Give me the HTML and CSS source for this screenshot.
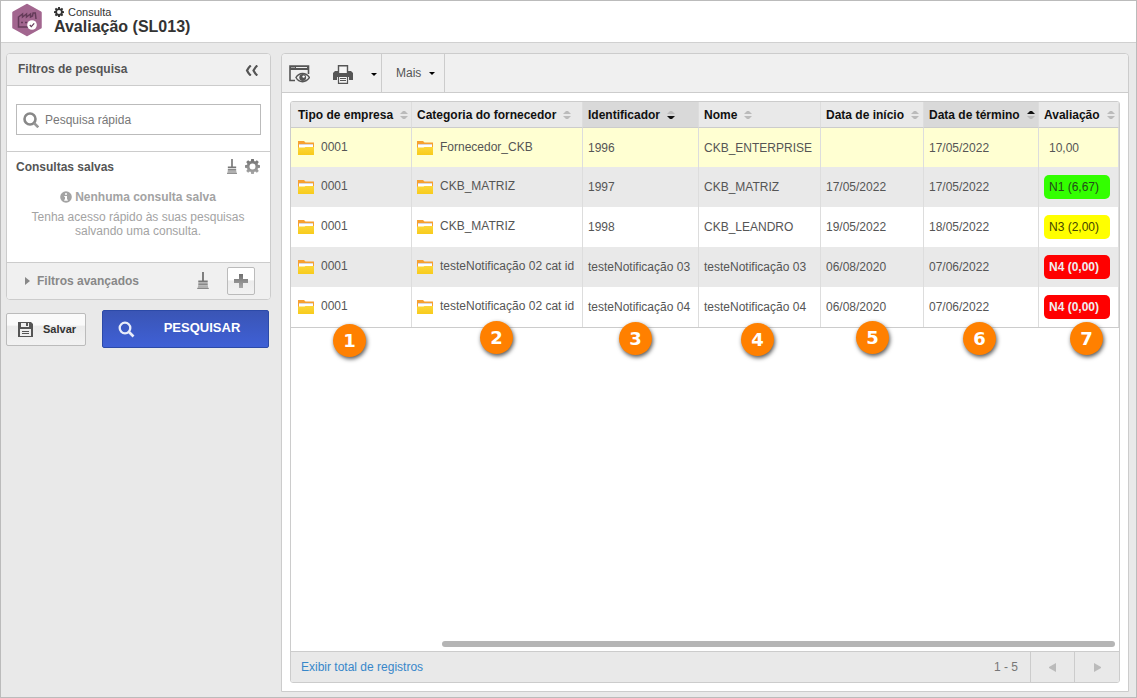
FILE: index.html
```html
<!DOCTYPE html>
<html lang="pt-BR">
<head>
<meta charset="utf-8">
<title>Avaliação (SL013)</title>
<link rel="stylesheet" href="styles.css">
</head>
<body>
<svg class="defs" width="0" height="0" aria-hidden="true">
  <defs>
    <linearGradient id="folderFill" x1="0" y1="0" x2="0" y2="1"><stop offset="0" stop-color="#fcd63a"/><stop offset="1" stop-color="#f8cb1c"/></linearGradient>
    <linearGradient id="grayFill" x1="0" y1="0" x2="0" y2="1"><stop offset="0" stop-color="#707070"/><stop offset="1" stop-color="#a8a8a8"/></linearGradient>
    <symbol id="folder" viewBox="0 0 16 14">
      <path d="M0 0h6l1.500 1.500H16V7H0z" fill="#f7a030"/><path d="M1 3h14v4H1z" fill="#fff"/><path d="M1 3h14v1H1z" fill="#ddd8d5"/><path d="M0 6.500h6.500L7.500 6H16v8H0z" fill="url(#folderFill)"/>
    </symbol>
    <symbol id="sort" viewBox="0 0 8 8">
      <path class="up" d="M0 3l3-3h2l3 3z"/><path class="down" d="M0 5h8L5 8H3z"/>
    </symbol>
    <symbol id="broom" viewBox="0 0 12 18">
      <path d="M5 0h2v9h4v2H1V9h4z" fill="#777"/><path d="M1 12h10v2H1z" fill="#888"/><path d="M1 14h10l1 4H0z" fill="#b0b0b0"/><path d="M0 17h12v1H0z" fill="#888"/>
    </symbol>
    <symbol id="gear" viewBox="0 0 16 16">
      <path fill-rule="evenodd" d="M6.600 0h2.800l.4 2.200 1 .4 1.900-1.300 2 2-1.300 1.900.4 1 2.200.4v2.800l-2.200.4-.4 1 1.300 1.900-2 2-1.900-1.300-1 .4L9.400 16H6.600l-.4-2.200-1-.4-1.900 1.300-2-2 1.300-1.900-.4-1L0 9.400V6.600l2.200-.4.4-1-1.300-1.900 2-2 1.900 1.300 1-.4zM8 4.800a3.200 3.200 0 1 0 0 6.400 3.200 3.200 0 0 0 0-6.400z"/>
    </symbol>
  </defs>
</svg>
<div class="app">
  <header class="top">
    <svg class="logo" width="32" height="34" viewBox="0 0 32 34" aria-hidden="true">
      <path d="M16 2l13.500 7.500v15L16 32 2.500 24.500v-15z" fill="#a2668f" stroke="#a2668f" stroke-width="2.500" stroke-linejoin="round"/>
      <path d="M17 24H7.500V14l4-3v3l4-3v3l4-3v3l2-1 .6-3h2.200l.7 6" fill="none" stroke="#643b59" stroke-width="1.500"/>
      <path d="M10 19.500h2M14 19.500h2" stroke="#643b59" stroke-width="1.500"/>
      <circle cx="21" cy="22" r="4.800" fill="#fff"/><path d="M18.800 22l1.500 1.600 2.900-3.200" fill="none" stroke="#643b59" stroke-width="1.200"/>
    </svg>
    <div>
      <div class="crumb"><svg width="10" height="10"><use href="#gear"/></svg>Consulta</div>
      <h1>Avaliação (SL013)</h1>
    </div>
  </header>
  <div class="body">
    <aside class="side">
      <section class="filters">
        <div class="filters-head">
          <h2>Filtros de pesquisa</h2>
          <button class="plain" aria-label="Recolher"><svg width="13" height="11" viewBox="0 0 13 11"><path d="M5.800.5C4 2 3 3.500 2 5.500c1 2 2 3.500 3.800 5M12.300.5c-1.800 1.500-2.800 3-3.800 5 1 2 2 3.500 3.800 5" fill="none" stroke="#555" stroke-width="2.200"/></svg></button>
        </div>
        <div class="quick">
          <label class="searchbox">
            <svg width="16" height="16" viewBox="0 0 16 16" aria-hidden="true"><circle cx="7" cy="7" r="5.500" fill="none" stroke="#888" stroke-width="2.600"/><path d="M11 11l4.300 4.300" stroke="#999" stroke-width="2.600"/></svg>
            <input type="text" placeholder="Pesquisa rápida" aria-label="Pesquisa rápida">
          </label>
        </div>
        <div class="saved">
          <div class="saved-head">
            <h3>Consultas salvas</h3>
            <button class="plain" aria-label="Limpar consultas"><svg width="10" height="15"><use href="#broom"/></svg></button>
            <button class="plain" aria-label="Configurar"><svg width="15" height="15" fill="url(#grayFill)"><use href="#gear"/></svg></button>
          </div>
          <p class="none"><svg width="12" height="12" viewBox="0 0 12 12" aria-hidden="true"><circle cx="6" cy="6" r="5.800" fill="#a3a3a3"/><path d="M5 2.200h2v1.600H5zM4.300 5H7v3.500h.8v1.200H4.200V8.500H5V6h-.7z" fill="#fff"/></svg>Nenhuma consulta salva</p>
          <p class="hint">Tenha acesso rápido às suas pesquisas salvando uma consulta.</p>
        </div>
        <div class="advanced">
          <button class="plain expand"><svg width="5" height="8" viewBox="0 0 5 8"><path d="M0 0l5 4-5 4z" fill="#888"/></svg>Filtros avançados</button>
          <button class="plain" aria-label="Limpar filtros"><svg width="12" height="17"><use href="#broom"/></svg></button>
          <button class="add" aria-label="Adicionar filtro"><svg width="14" height="14" viewBox="0 0 14 14"><path d="M5 0h4v5h5v4H9v5H5V9H0V5h5z" fill="url(#grayFill)"/></svg></button>
        </div>
      </section>
      <div class="actions">
        <button class="save"><svg width="15" height="15" viewBox="0 0 15 15"><path d="M0 0h13l2 2v13H0z" fill="#555"/><path d="M3 1h8v4H3zM2 7h11v7H2z" fill="#eee"/><path d="M8 1h2v3H8zM4 9h7v1H4zM4 11h7v1H4z" fill="#555"/></svg>Salvar</button>
        <button class="search"><svg width="17" height="17" viewBox="0 0 17 17"><circle cx="7" cy="7" r="5.300" fill="none" stroke="#e9edfa" stroke-width="2.300"/><path d="M11 11l4.500 4.500" stroke="#e9edfa" stroke-width="2.600"/></svg><span>PESQUISAR</span></button>
      </div>
    </aside>
    <main class="panel">
      <div class="toolbar">
        <div class="group icons">
          <button class="plain" aria-label="Visualizar"><svg width="21" height="18" viewBox="0 0 21 18"><path d="M6 15.500H1V1h18.500v8" fill="none" stroke="#555" stroke-width="1.600"/><path d="M1 1h18.500v4H1z" fill="#555"/><path d="M2.500 2.500h1M4.500 2.500h1M7 2.500h11" stroke="#eee"/><path d="M7 12.500c3-5.500 10-5.500 13.500 0-3.500 5.500-10.500 5.500-13.500 0z" fill="#f0f0f0" stroke="#555" stroke-width="1.500"/><circle cx="13.700" cy="12.500" r="3.400" fill="#555"/><circle cx="14.600" cy="11.600" r="1.200" fill="#fff"/></svg></button>
          <button class="plain" aria-label="Imprimir"><svg width="20" height="19" viewBox="0 0 20 19"><path d="M5.500 8V.8h9V8" fill="#f5f5f5" stroke="#555" stroke-width="1.400"/><path d="M2 6h3v2h10V6h3l2 2v7h-4v-3H4v3H0V8z" fill="#555"/><path d="M5.500 12v6.300h9V12" fill="#f5f5f5" stroke="#555" stroke-width="1.200"/><path d="M7 13.500h6M7 15.500h6" stroke="#555"/></svg></button>
          <button class="plain" aria-label="Opções de impressão"><svg width="6" height="3" viewBox="0 0 6 3"><path d="M0 0h6L3 3z"/></svg></button>
        </div>
        <div class="group"><button class="plain more">Mais<svg width="6" height="3" viewBox="0 0 6 3"><path d="M0 0h6L3 3z"/></svg></button></div>
      </div>
      <div class="content">
        <div class="grid">
          <div class="rows">
            <table>
              <colgroup><col class="c1"><col class="c2"><col class="c3"><col class="c4"><col class="c5"><col class="c6"><col class="c7"></colgroup>
              <thead><tr>
                <th><div>Tipo de empresa<svg><use href="#sort"/></svg></div></th>
                <th><div>Categoria do fornecedor<svg><use href="#sort"/></svg></div></th>
                <th class="sorted desc"><div>Identificador<svg><use href="#sort"/></svg></div></th>
                <th><div>Nome<svg><use href="#sort"/></svg></div></th>
                <th><div>Data de início<svg><use href="#sort"/></svg></div></th>
                <th class="sorted asc"><div>Data de término<svg><use href="#sort"/></svg></div></th>
                <th><div>Avaliação<svg><use href="#sort"/></svg></div></th>
              </tr></thead>
              <tbody>
                <tr class="selected"><td><div class="item"><svg><use href="#folder"/></svg>0001</div></td><td><div class="item"><svg><use href="#folder"/></svg>Fornecedor_CKB</div></td><td>1996</td><td>CKB_ENTERPRISE</td><td></td><td>17/05/2022</td><td><span class="score">10,00</span></td></tr>
                <tr class="alt"><td><div class="item"><svg><use href="#folder"/></svg>0001</div></td><td><div class="item"><svg><use href="#folder"/></svg>CKB_MATRIZ</div></td><td>1997</td><td>CKB_MATRIZ</td><td>17/05/2022</td><td>17/05/2022</td><td><span class="score green">N1 (6,67)</span></td></tr>
                <tr><td><div class="item"><svg><use href="#folder"/></svg>0001</div></td><td><div class="item"><svg><use href="#folder"/></svg>CKB_MATRIZ</div></td><td>1998</td><td>CKB_LEANDRO</td><td>19/05/2022</td><td>18/05/2022</td><td><span class="score yellow">N3 (2,00)</span></td></tr>
                <tr class="alt"><td><div class="item"><svg><use href="#folder"/></svg>0001</div></td><td><div class="item"><svg><use href="#folder"/></svg>testeNotificação 02 cat id</div></td><td>testeNotificação 03</td><td>testeNotificação 03</td><td>06/08/2020</td><td>07/06/2022</td><td><span class="score red">N4 (0,00)</span></td></tr>
                <tr><td><div class="item"><svg><use href="#folder"/></svg>0001</div></td><td><div class="item"><svg><use href="#folder"/></svg>testeNotificação 02 cat id</div></td><td>testeNotificação 04</td><td>testeNotificação 04</td><td>06/08/2020</td><td>07/06/2022</td><td><span class="score red">N4 (0,00)</span></td></tr>
              </tbody>
            </table>
            <span class="pin p1">1</span><span class="pin p2">2</span><span class="pin p3">3</span><span class="pin p4">4</span><span class="pin p5">5</span><span class="pin p6">6</span><span class="pin p7">7</span>
          </div>
          <div class="scroll"><div class="thumb"></div></div>
          <footer class="pager">
            <a href="#total">Exibir total de registros</a>
            <span class="range">1 - 5</span>
            <button class="plain page" aria-label="Anterior"><svg width="7" height="9" viewBox="0 0 7 9"><path d="M7 0v9L0 5V4z" fill="#bbb"/></svg></button>
            <button class="plain page" aria-label="Próxima"><svg width="7" height="9" viewBox="0 0 7 9"><path d="M0 0v9l7-4V4z" fill="#bbb"/></svg></button>
          </footer>
        </div>
      </div>
    </main>
  </div>
</div>
</body>
</html>
```
FILE: styles.css
```css
* { box-sizing: border-box; }
body, h1, h2, h3, p { margin: 0; }
body { font: 12px/14px "Liberation Sans", Arial, sans-serif; color: #555; }
svg { display: block; flex: none; }
.defs { position: absolute; }
button { font: inherit; color: inherit; cursor: pointer; }
.plain { border: 0; padding: 0; background: none; }

.app { min-height: 100vh; display: flex; flex-direction: column; border: 1px solid #bbb; background: #e9e9e9; }
.top { display: flex; align-items: flex-start; gap: 11px; height: 42px; padding: 2px 10px 0; background: #fff; border-bottom: 1px solid #d0d0d0; }
.top .crumb { display: flex; align-items: center; gap: 4px; margin-top: 2px; font-size: 11px; color: #333; }
.crumb svg { fill: #333; }
h1 { font-size: 16px; line-height: 16px; color: #333; }

.body { flex: 1; display: flex; gap: 10px; padding: 10px 7px 5px 5px; }
.side { width: 265px; flex: none; }
.filters { border: 1px solid #ccc; border-radius: 4px; background: #fff; overflow: hidden; }
.filters-head { display: flex; align-items: flex-start; justify-content: space-between; height: 32px; padding: 8px 12px 0 11px; background: #f0f0f0; border-bottom: 1px solid #ccc; }
.filters-head .plain { margin-top: 3px; }
h2, h3 { font-size: 12px; line-height: 14px; }
.quick { padding: 18px 9px 16px; border-bottom: 1px solid #ccc; }
.searchbox { display: flex; align-items: center; gap: 6px; height: 31px; padding: 0 6px; border: 1px solid #bbb; }
.searchbox input { flex: 1; min-width: 0; border: 0; padding: 0; outline: 0; font: inherit; background: none; }
.searchbox input::placeholder { color: #777; opacity: 1; }
.saved { height: 110px; padding: 7px 10px 0 9px; text-align: center; color: #a3a3a3; }
.saved-head { display: flex; align-items: center; gap: 8px; text-align: left; color: #555; }
.saved-head h3 { flex: 1; }
.none { display: flex; justify-content: center; align-items: center; gap: 3px; margin-top: 16px; font-weight: bold; }
.hint { margin: 6px 10px 0; }
.advanced { display: flex; align-items: center; height: 37px; padding: 0 15px 1px 18px; background: #f0f0f0; border-top: 1px solid #ccc; }
.expand { display: flex; align-items: center; gap: 7px; margin-right: auto; font-weight: bold; color: #888; }
.add { display: grid; place-items: center; width: 28px; height: 28px; margin-left: 18px; padding: 0; border: 1px solid #bbb; border-radius: 2px; background: linear-gradient(#fff 45%, #ececec 50%, #f2f2f2); }
.actions { display: flex; align-items: center; justify-content: space-between; padding: 10px 2px 0 0; }
.save { display: flex; align-items: center; gap: 10px; height: 33px; width: 80px; padding: 0 11px; border: 1px solid #bbb; border-radius: 2px; font-weight: bold; font-size: 11px; color: #333; background: linear-gradient(#fafafa 35%, #ebebeb 40%, #f2f2f2); }
.search { display: flex; align-items: center; width: 167px; height: 38px; padding: 0 15px; border: 1px solid #2c4aa8; border-radius: 2px; font-weight: bold; font-size: 13px; color: #fff; background: linear-gradient(#3a55b5, #3f60d6); }
.search span { flex: 1; padding-bottom: 2px; padding-left: 16px; }

.panel { flex: 1; min-width: 0; display: flex; flex-direction: column; border: 1px solid #ccc; border-radius: 4px 4px 0 0; background: #fff; }
.toolbar { display: flex; height: 39px; background: #f0f0f0; border-bottom: 1px solid #ccc; border-radius: 4px 4px 0 0; }
.group { display: flex; align-items: center; border-right: 1px solid #ccc; }
.icons { width: 100px; padding: 2px 4px 0 7px; }
.icons .plain:nth-child(2) { margin-left: 23px; }
.icons .plain:last-child { margin-left: auto; }
.more { display: flex; align-items: center; gap: 8px; padding: 0 9px 0 14px; }
.content { flex: 1; display: flex; padding: 8px; }
.grid { flex: 1; min-width: 0; display: flex; flex-direction: column; border: 1px solid #ccc; border-radius: 3px; overflow: hidden; }
.rows { position: relative; flex: 1; }
table { width: 100%; table-layout: fixed; border-collapse: separate; border-spacing: 0; border-bottom: 1px solid #ccc; }
.c1 { width: 121px; } .c2 { width: 171px; } .c3 { width: 116px; } .c4 { width: 122px; } .c5 { width: 103px; } .c6 { width: 115px; }
th, td { padding: 0 5px; text-align: left; white-space: nowrap; border-right: 1px solid #ddd; }
th:first-child, td:first-child { padding-left: 7px; }
th { height: 26px; background: #e9e9e9; color: #111; border-bottom: 1px solid #ccc; }
th div { display: flex; align-items: center; gap: 7px; }
th svg { width: 8px; height: 8px; }
.up { fill: var(--up, #bbb); }
.down { fill: var(--down, #bbb); }
.sorted { background: #d9d9d9; }
.asc { --up: #111; }
.desc { --down: #111; }
td { height: 40px; }
.selected td { height: 39px; background: #ffffd2; }
.alt td { background: #e9e9e9; }
.item { display: flex; align-items: center; gap: 7px; padding-bottom: 2px; }
.item svg { width: 16px; height: 14px; margin-top: 2px; }
.score { display: block; height: 24px; padding: 0 5px; line-height: 24px; border-radius: 5px; }
td:last-child { padding-right: 8px; }
.green { background: #3f0; color: #244a1c; }
.yellow { background: #ff0; color: #444400; }
.red { background: #f00; color: #eee; font-weight: bold; }
.pin { position: absolute; width: 33px; height: 33px; border-radius: 50%; background: #ff8000; color: #fff; font: bold 18px/33px "DejaVu Sans", sans-serif; text-align: center; box-shadow: 1px 2px 4px #555; }
.p1 { left: 42px; top: 222px; } .p2 { left: 189px; top: 219px; } .p3 { left: 328px; top: 220px; } .p4 { left: 450px; top: 221px; } .p5 { left: 565px; top: 219px; } .p6 { left: 672px; top: 220px; } .p7 { left: 779px; top: 220px; }
.scroll { padding: 0 4px 4px 0; }
.thumb { width: 673px; max-width: 100%; height: 6px; margin-left: auto; border-radius: 3px; background: #b5b5b5; }
.pager { display: flex; align-items: center; height: 31px; padding-left: 10px; background: #e9e9e9; border-top: 1px solid #ccc; }
.pager a { color: #3787c9; text-decoration: none; }
.range { margin: 0 12px 0 auto; color: #777; }
.page { display: grid; place-items: center; align-self: stretch; width: 44px; border-left: 1px solid #ccc; }
.page:last-child { width: 45px; }
```
